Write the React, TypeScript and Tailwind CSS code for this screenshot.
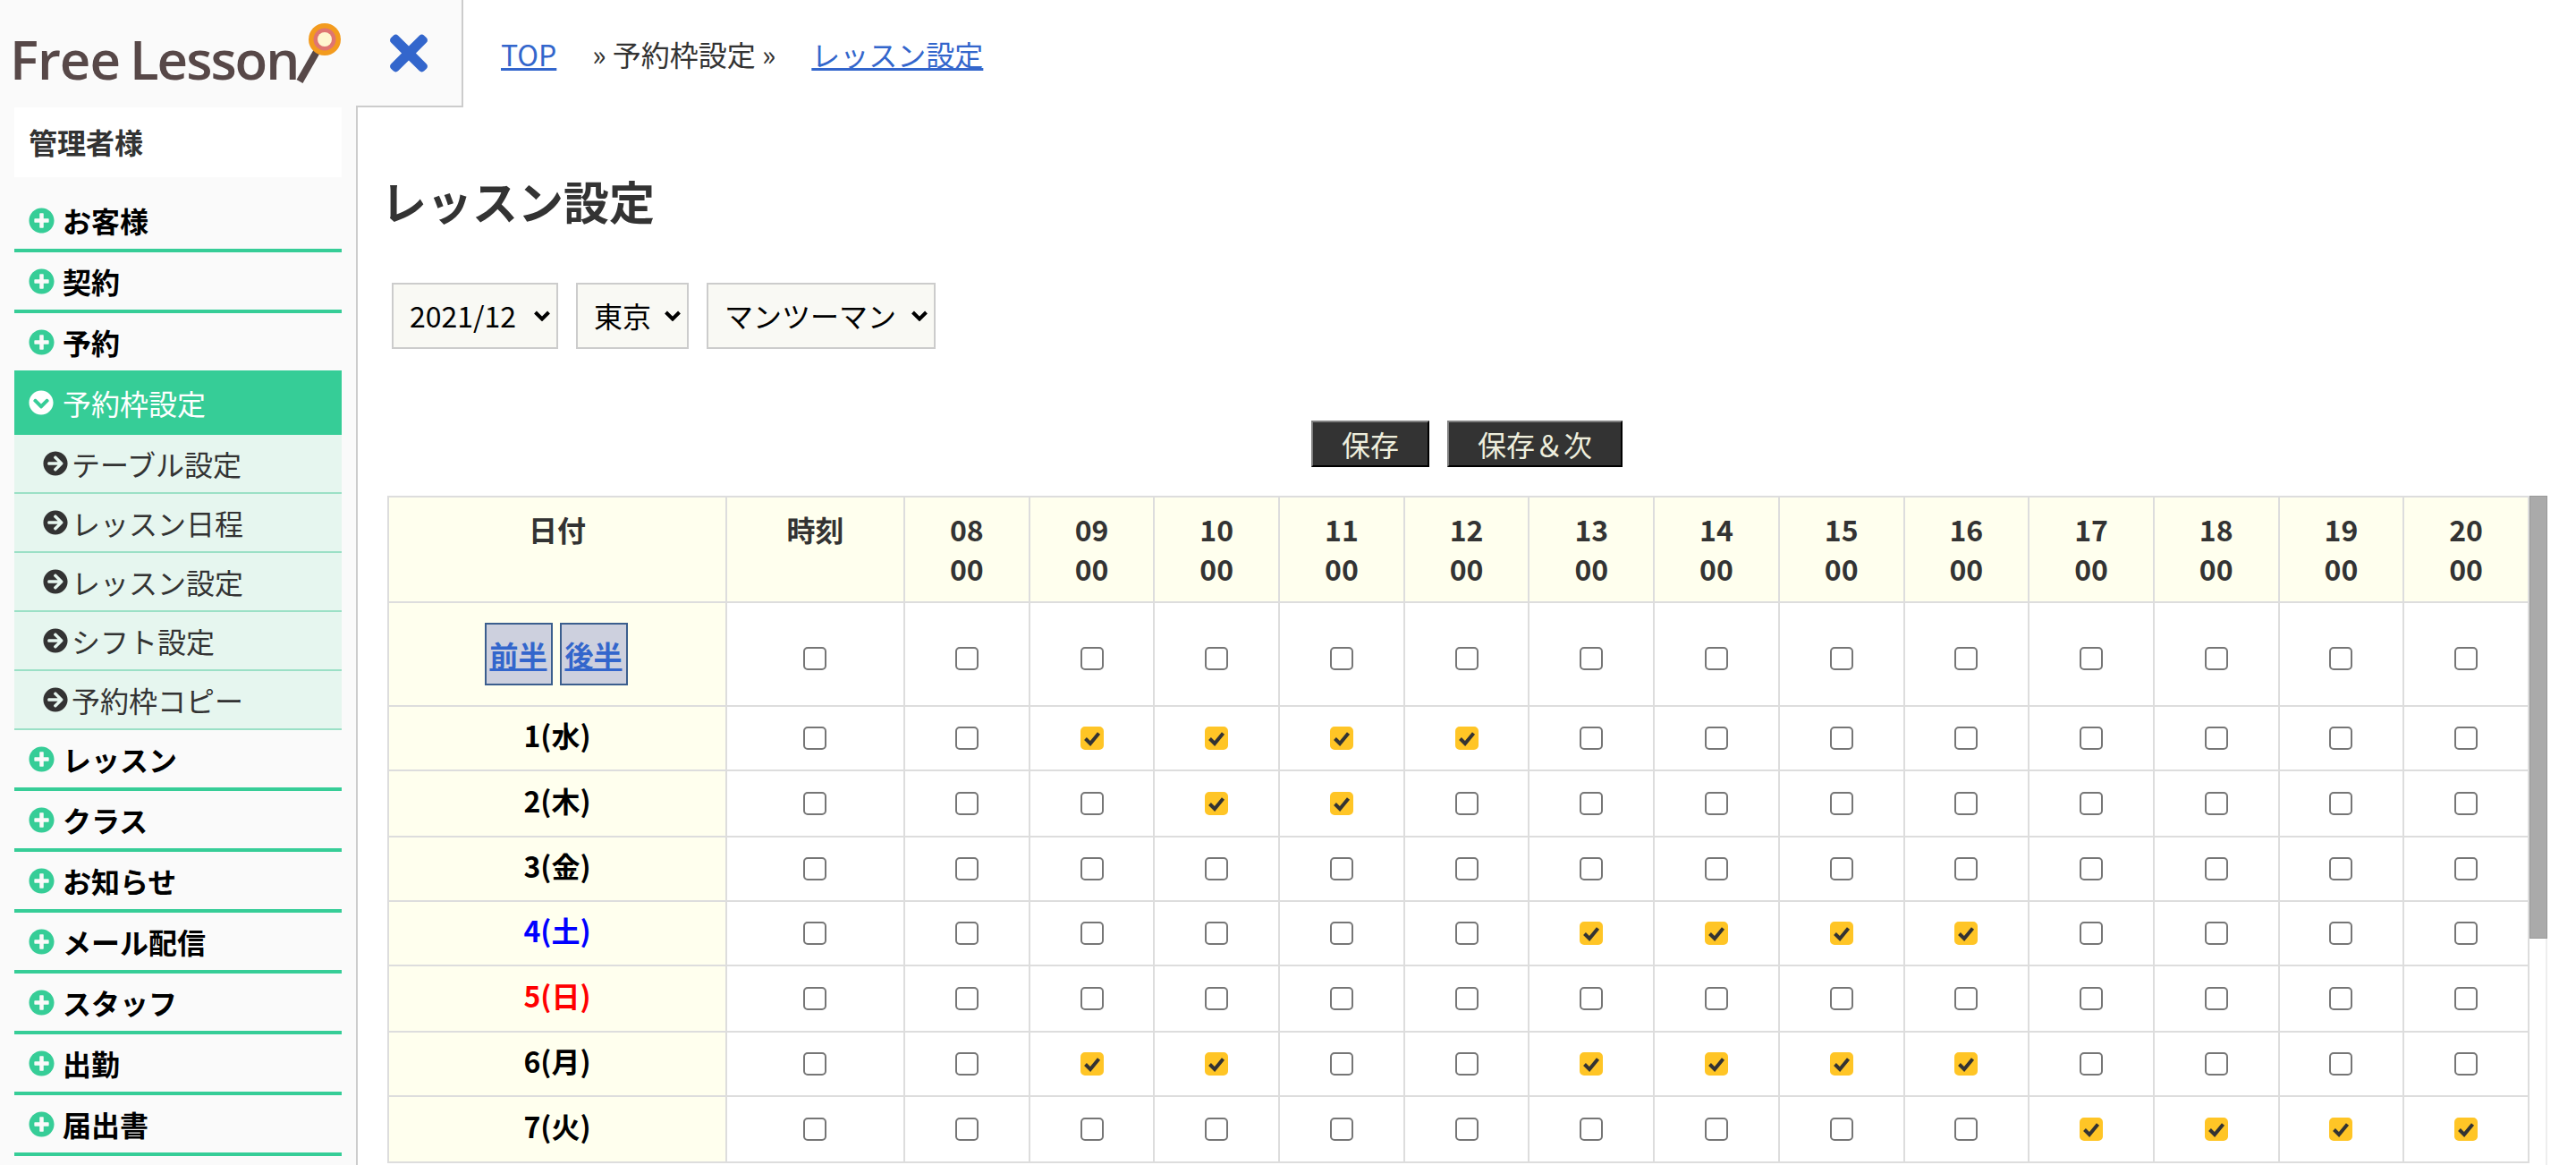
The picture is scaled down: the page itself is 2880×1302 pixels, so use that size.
import React from "react";
import { FaPlusCircle, FaChevronCircleDown, FaArrowCircleRight, FaTimes } from "react-icons/fa";

const hours = ["08","09","10","11","12","13","14","15","16","17","18","19","20"];
const topItems = ["お客様","契約","予約"];
const subItems = ["テーブル設定","レッスン日程","レッスン設定","シフト設定","予約枠コピー"];
const bottomItems = ["レッスン","クラス","お知らせ","メール配信","スタッフ","出勤","届出書"];

const rows = [
  { label: "1(水)", color: "text-black", h: "h-[72px]", on: ["09","10","11","12"] },
  { label: "2(木)", color: "text-black", h: "h-[74px]", on: ["10","11"] },
  { label: "3(金)", color: "text-black", h: "h-[72px]", on: [] },
  { label: "4(土)", color: "text-[#0000ff]", h: "h-[72px]", on: ["13","14","15","16"] },
  { label: "5(日)", color: "text-[#ff0000]", h: "h-[74px]", on: [] },
  { label: "6(月)", color: "text-black", h: "h-[72px]", on: ["09","10","13","14","15","16"] },
  { label: "7(火)", color: "text-black", h: "h-[74px]", on: ["17","18","19","20"] },
];

function Check({ on = false }: { on?: boolean }) {
  return (
    <label className="relative flex mx-auto w-[26px] h-[26px]">
      <input
        type="checkbox"
        defaultChecked={on}
        className="appearance-none w-[26px] h-[26px] rounded-[5px] border-2 border-[#767676] bg-white checked:bg-[#ffc526] checked:border-[#ffc526]"
      />
      {on && (
        <svg viewBox="0 0 26 26" className="absolute inset-0 w-[26px] h-[26px] pointer-events-none">
          <polyline points="5.5,13.5 11,19 20.5,7.5" fill="none" stroke="#333" strokeWidth="4" />
        </svg>
      )}
    </label>
  );
}

function Menu({ label }: { label: string }) {
  return (
    <li className="h-[68px] border-b-4 border-[#36cd97] flex items-center pl-[16px] font-bold text-black">
      <FaPlusCircle className="w-[29px] h-[29px] text-[#36cd97] shrink-0" />
      <span className="ml-[9px]">{label}</span>
    </li>
  );
}

function Select({ label, w }: { label: string; w: string }) {
  return (
    <div className="relative">
      <select className={`appearance-none ${w} h-[74px] border-2 border-[#ccc] bg-[#f9f9f4] pl-[18px] pb-[3px] text-black`}>
        <option>{label}</option>
      </select>
      <svg viewBox="0 0 18 12" className="absolute right-[9px] top-[31px] w-[18px] h-[12px] pointer-events-none">
        <polyline points="1.5,2 9,9.5 16.5,2" fill="none" stroke="#000" strokeWidth="4" />
      </svg>
    </div>
  );
}

export default function App() {
  return (
    <div className="w-[2880px] h-[1302px] overflow-hidden bg-white text-[32px] leading-[44px] text-[#333] font-['Noto_Sans_CJK_JP',sans-serif]">
      <header className="flex h-[120px]">
        <div className="relative w-[398px] h-[120px] bg-[#fafafa] pl-[11px] pt-[26px] text-[#574848] font-semibold text-[60px] leading-[80px] font-['Open_Sans',sans-serif]">
          <span className="tracking-[-1px]">Free</span>
          <span className="ml-[11px] tracking-[-2px]">Lesson</span>
          <svg viewBox="0 0 60 70" className="absolute left-[326px] top-[26px] w-[60px] h-[70px] pointer-events-none">
            <line x1="9" y1="65" x2="29" y2="30" stroke="#574848" strokeWidth="8" />
            <circle cx="37" cy="18" r="18" fill="#f39b1e" />
            <circle cx="37" cy="18" r="12.5" fill="#df7571" />
            <circle cx="37" cy="18" r="8" fill="#fff6cf" />
          </svg>
        </div>
        <div className="w-[120px] h-[120px] bg-[#fafafa] border-r-2 border-b-2 border-[#ccc] flex items-center justify-center">
          <FaTimes className="w-[42px] h-[61px] text-[#3366cc]" />
        </div>
        <nav className="flex items-center gap-[40px] pl-[42px]">
          <a href="#" className="underline text-[#3366cc]">TOP</a>
          <span>» 予約枠設定 »</span>
          <a href="#" className="underline text-[#3366cc]">レッスン設定</a>
        </nav>
      </header>

      <div className="flex h-[1182px]">
        <aside className="w-[400px] shrink-0 bg-[#fafafa] border-r-2 border-[#ccc] pl-[16px] pr-[16px]">
          <div className="w-[366px] h-[78px] bg-white flex items-center pl-[16px] pb-[2px] font-bold">管理者様</div>
          <ul className="w-[366px] mt-[16px]">
            {topItems.map((m) => <Menu key={m} label={m} />)}
            <li className="h-[68px] bg-[#36cd97] flex items-center pl-[16px] pb-[4px] text-white">
              <FaChevronCircleDown className="w-[28px] h-[28px] shrink-0" />
              <span className="ml-[10px]">予約枠設定</span>
            </li>
            {subItems.map((s) => (
              <li key={s} className="h-[66px] bg-[#e6f6ef] border-b-2 border-[#9be0c6] flex items-center pl-[32px]">
                <FaArrowCircleRight className="w-[28px] h-[28px] shrink-0 text-[#333]" />
                <span className="ml-[4px]">{s}</span>
              </li>
            ))}
            {bottomItems.map((m) => <Menu key={m} label={m} />)}
          </ul>
        </aside>

        <main className="pl-[33px] w-[2448px]">
          <h1 className="mt-[68px] -ml-[7px] h-[72px] text-[51px] leading-[72px] font-bold">レッスン設定</h1>
          <div className="mt-[56px] ml-[5px] flex gap-[20px]">
            <Select label="2021/12" w="w-[186px]" />
            <Select label="東京" w="w-[126px]" />
            <Select label="マンツーマン" w="w-[256px]" />
          </div>
          <div className="mt-[80px] w-[2414px] flex justify-center gap-[20px]">
            <button className="w-[132px] h-[52px] bg-[#333] text-[#eeeedd] border-2 border-t-[#808080] border-l-[#808080] border-b-black border-r-black">保存</button>
            <button className="w-[196px] h-[52px] bg-[#333] text-[#eeeedd] border-2 border-t-[#808080] border-l-[#808080] border-b-black border-r-black">保存＆次</button>
          </div>
          <div className="mt-[32px] flex items-start w-[2415px]">
            <table className="table-fixed border-collapse w-[2395px] shrink-0">
              <colgroup>
                <col className="w-[378px]" />
                <col className="w-[199px]" />
                {hours.map((h) => <col key={h} className="w-[139.69px]" />)}
              </colgroup>
              <thead>
                <tr className="h-[118px] bg-[#ffffee] font-bold">
                  <th className="border-2 border-[#ddd] align-top pt-[13px] font-bold">日付</th>
                  <th className="border-2 border-[#ddd] align-top pt-[13px] font-bold">時刻</th>
                  {hours.map((h) => (
                    <th key={h} className="border-2 border-[#ddd] align-top pt-[13px] font-bold">{h}<br />00</th>
                  ))}
                </tr>
              </thead>
              <tbody>
                <tr className="h-[116px]">
                  <td className="border-2 border-[#ddd] bg-[#ffffee] pr-[3px]">
                    <div className="flex justify-center gap-[8px]">
                      {["前半","後半"].map((t) => (
                        <button key={t} className="w-[76px] h-[70px] bg-[#cdd0de] border-2 border-[#3b5e8e] font-bold text-[#3366cc] underline">{t}</button>
                      ))}
                    </div>
                  </td>
                  <td className="border-2 border-[#ddd] pt-[10px] pr-[2px]"><Check /></td>
                  {hours.map((h) => <td key={h} className="border-2 border-[#ddd] pt-[10px]"><Check /></td>)}
                </tr>
                {rows.map((r) => (
                  <tr key={r.label} className={r.h}>
                    <td className={`border-2 border-[#ddd] bg-[#ffffee] text-center font-bold pb-[8px] ${r.color}`}>{r.label}</td>
                    <td className="border-2 border-[#ddd] pr-[2px]"><Check /></td>
                    {hours.map((h) => (
                      <td key={h} className="border-2 border-[#ddd]"><Check on={r.on.includes(h)} /></td>
                    ))}
                  </tr>
                ))}
              </tbody>
            </table>
            <div className="w-[20px] h-[748px] shrink-0 bg-white border-r-2 border-[#eee]">
              <div className="w-[20px] h-[495px] bg-[#aaa] border border-[#999]" />
            </div>
          </div>
        </main>
      </div>
    </div>
  );
}
